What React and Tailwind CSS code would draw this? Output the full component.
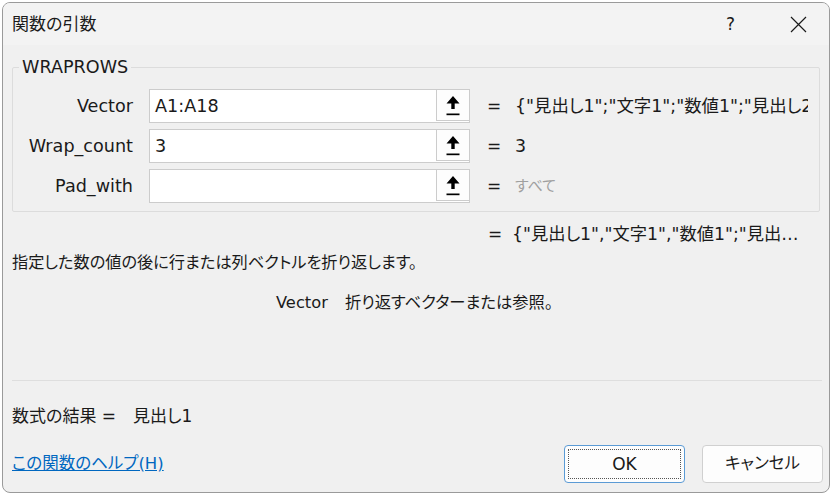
import React from "react";

function RefButton() {
  return (
    <div className="w-[34px] h-full border border-[#cccccc] bg-[#fdfdfd] flex items-center justify-center -my-px -mr-px">
      <svg width="16" height="24" viewBox="0 0 16 24">
        <path d="M8 3 L14.5 10.5 L9.7 10.5 L9.7 16 L6.3 16 L6.3 10.5 L1.5 10.5 Z" fill="#000" />
        <rect x="1.5" y="20.5" width="13" height="1.7" fill="#000" />
      </svg>
    </div>
  );
}

function ArgRow({ label, value, result, resultClass }) {
  return (
    <div className="flex items-center h-[34px]">
      <div className="w-[120px] shrink-0 text-right text-[#1a1a1a] text-[17.6px]">{label}</div>
      <div className="ml-[16px] w-[321px] h-[34px] shrink-0 flex border border-[#cccccc] bg-white">
        <div className="flex-1 flex items-center pl-[5px] text-[#1a1a1a] text-[17.6px]">{value}</div>
        <RefButton />
      </div>
      <div className="ml-[17px] w-[12px] shrink-0 text-[#1a1a1a]">=</div>
      <div className={"ml-[16px] w-[293px] overflow-hidden whitespace-nowrap " + resultClass}>{result}</div>
    </div>
  );
}

export default function App() {
  const font = { fontFamily: '"DejaVu Sans", "Noto Sans CJK JP", sans-serif' };
  return (
    <div className="w-[834px] h-[495px] bg-white overflow-hidden [font-feature-settings:'palt']" style={font}>
      <div className="ml-[2px] mt-[2px] w-[828px] h-[491px] rounded-[8px] border border-[#9a9a9a] bg-[#f0f0f0] overflow-hidden flex flex-col text-[17px] leading-[22px]">
        {/* Title bar */}
        <div className="h-[42px] shrink-0 bg-[#f3f3f3] flex items-center pl-[9px] pr-[22px]">
          <div className="text-[#1a1a1a]">関数の引数</div>
          <div className="ml-auto flex items-center">
            <span className="text-[#1a1a1a] text-[17px]">?</span>
            <svg className="ml-[55px]" width="17" height="17" viewBox="0 0 17 17">
              <path d="M1 1 L16 16 M16 1 L1 16" stroke="#1a1a1a" strokeWidth="1.2" />
            </svg>
          </div>
        </div>

        {/* Body */}
        <div className="flex-1 flex flex-col px-[9px]">
          <fieldset className="mt-[11px] border border-[#dcdcdc] rounded-[2px] pt-[11px] pb-[8px] min-w-0">
            <legend className="ml-[6px] px-[3px] text-[#1a1a1a] text-[17.6px]">WRAPROWS</legend>
            <div className="flex flex-col gap-[6px]">
              <ArgRow
                label="Vector"
                value="A1:A18"
                result={'{"見出し1";"文字1";"数値1";"見出し2";"文字2"}'}
                resultClass="text-[#1a1a1a] text-[17.4px]"
              />
              <ArgRow label="Wrap_count" value="3" result="3" resultClass="text-[#1a1a1a] text-[17.4px]" />
              <ArgRow label="Pad_with" value="" result="すべて" resultClass="text-[#a0a0a0] text-[15px]" />
            </div>
          </fieldset>

          {/* Formula result */}
          <div className="mt-[11px] h-[22px] flex items-center">
            <div className="ml-[476px] w-[12px] text-[#1a1a1a]">=</div>
            <div className="ml-[12px] w-[300px] overflow-hidden whitespace-nowrap text-[#1a1a1a] text-[17.3px]">{'{"見出し1","文字1","数値1";"見出…'}</div>
          </div>

          <div className="mt-[7px] h-[22px] text-[#1a1a1a] text-[16.2px] whitespace-nowrap">指定した数の値の後に行または列ベクトルを折り返します。</div>

          <div className="mt-[18px] h-[22px] flex items-center whitespace-nowrap text-[#1a1a1a] text-[16.3px]">
            <span className="ml-[264px]">Vector</span>
            <span className="ml-[17px]">折り返すベクターまたは参照。</span>
          </div>

          <div className="mt-[66px] h-px bg-[#dedede] mr-[-2px]"></div>

          <div className="mt-[24px] h-[22px] flex items-center whitespace-nowrap text-[#1a1a1a] text-[17px]">
            <span>数式の結果 =</span>
            <span className="ml-[17px]">見出し1</span>
          </div>

          <div className="mt-[18px] flex items-center">
            <a className="text-[#0067c0] underline text-[16.5px] whitespace-nowrap cursor-pointer">この関数のヘルプ(H)</a>
            <button className="ml-auto w-[121px] h-[38px] rounded-[4px] border border-[#5b9bd5] bg-[#fdfdfd] p-[3px]">
              <div className="w-full h-full border border-dotted border-[#555] flex items-center justify-center text-[#1a1a1a] text-[17px]">OK</div>
            </button>
            <button className="ml-[17px] mr-[-3px] w-[121px] h-[38px] rounded-[4px] border border-[#d0d0d0] bg-[#fdfdfd] flex items-center justify-center text-[#1a1a1a] text-[16.5px]">キャンセル</button>
          </div>
        </div>
      </div>
    </div>
  );
}
